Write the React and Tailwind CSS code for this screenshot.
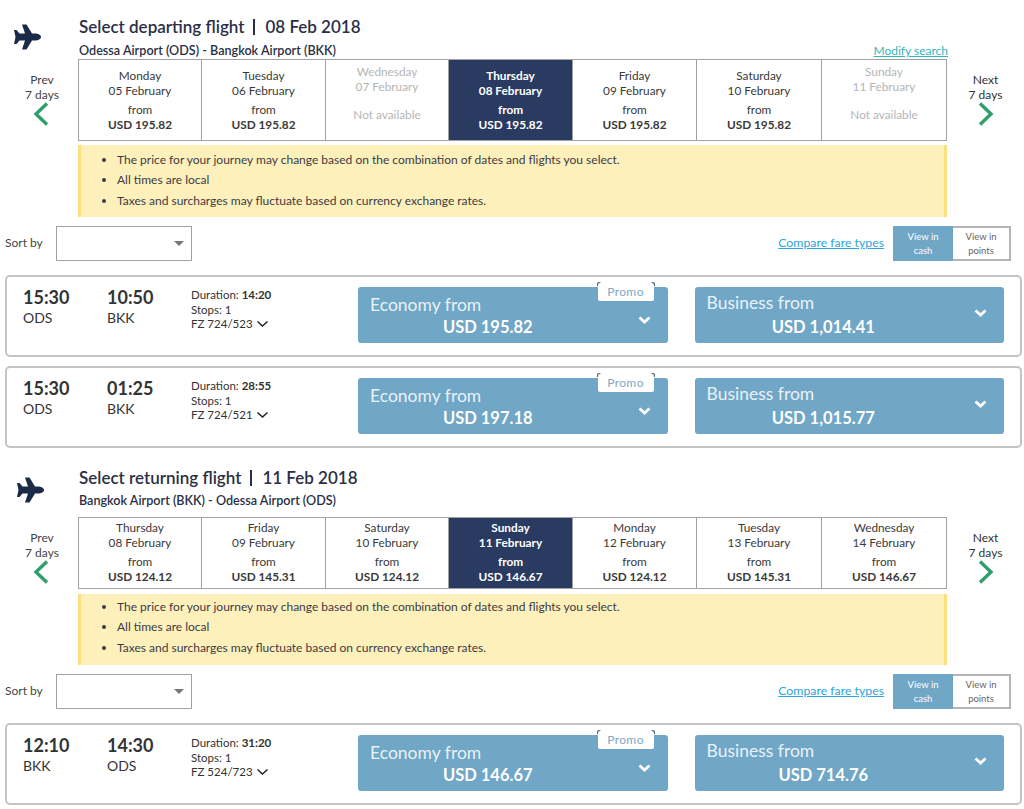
import React from 'react';

const PlaneIcon = () => (
  <svg width="30" height="28" viewBox="0 0 30 28" className="text-[#1c2a4a]">
    <path
      fill="currentColor"
      d="M29 14c0-2-3-3.500-6-3.500h-3L14.500 1.500H10l3 9H7.500L4.500 7H2l1.500 7L2 21h2.500l3-3.500H13l-3 9h4.500l5.500-9h3c3 0 6-1.500 6-3.500z"
    />
  </svg>
);

const Chevron = ({ dir }) => (
  <svg width="18" height="24" viewBox="0 0 18 24" className={dir === 'left' ? 'text-[#2e9e6b] mr-[3px]' : 'text-[#2e9e6b]'}>
    <path
      d={dir === 'left' ? 'M15 1.500 L4 12 L15 22.500' : 'M3 1.500 L14 12 L3 22.500'}
      fill="none"
      stroke="currentColor"
      strokeWidth="3.400"
    />
  </svg>
);

const SmallChevron = ({ className, thin }) => (
  <svg width="13" height="8" viewBox="0 0 13 8" className={className}>
    <path d="M1.500 1.500 L6.500 6 L11.500 1.500" fill="none" stroke="currentColor" strokeWidth={thin ? '1.500' : '2.800'} />
  </svg>
);

const DayCell = ({ day, date, price, active, disabled, last, compact }) => {
  if (disabled) {
    return (
      <div className={`flex flex-col items-center text-[11.800px] leading-[14.500px] text-[#b5b5b5] pt-[5px] ${last ? '' : 'border-r border-[#a0a0a0]'}`}>
        <div>{day}</div>
        <div>{date}</div>
        <div className="mt-[14px]">Not available</div>
      </div>
    );
  }
  return (
    <div
      className={`flex flex-col items-center text-[11.800px] leading-[14.500px] ${compact ? 'pt-[3px]' : 'pt-[9px]'} ${
        active ? 'bg-[#2a3b62] text-white font-bold' : 'text-[#3a3a3a]'
      } ${last ? '' : 'border-r border-[#a0a0a0]'}`}
    >
      <div>{day}</div>
      <div>{date}</div>
      <div className="mt-[5px]">from</div>
      <div className="font-bold">{price}</div>
    </div>
  );
};

const FareButton = ({ label, price, promo }) => (
  <div className="relative flex-1 h-[56px] rounded-[3px] bg-[#70a6c6] text-white">
    {promo && (
      <div className="absolute right-[14px] top-[-4px] w-[56px] h-[18px]">
        {/* folded corners of the ribbon */}
        <div className="absolute left-[-1px] top-[-1px] w-[4px] h-[4px] rounded-t-[2px] bg-[#55646e]"></div>
        <div className="absolute right-[-1px] top-[-1px] w-[4px] h-[4px] rounded-t-[2px] bg-[#55646e]"></div>
        <div className="absolute inset-0 flex items-center justify-center bg-white rounded-[2px] text-[12px] text-[#7fa9c4] tracking-[0.4px]">
          Promo
        </div>
      </div>
    )}
    <div className={`absolute left-[12px] text-[17.500px] leading-[20px] text-[#e9f2f7] ${promo ? 'top-[8px]' : 'top-[6px]'}`}>{label}</div>
    <div className={`absolute left-0 top-[30px] text-center text-[16.500px] leading-[20px] font-bold ${promo ? 'right-[50px]' : 'right-[52px]'}`}>{price}</div>
    <SmallChevron className={`absolute right-[17px] ${promo ? 'top-[29px]' : 'top-[22px]'}`} />
  </div>
);

const FlightCard = ({ flight }) => (
  <div className="mx-[5px] w-[1017px] h-[82px] border-2 border-[#c4c4c4] rounded-[5px] flex items-start text-[#333]">
    <div className="w-[84px] pl-[16px] pt-[10px]">
      <div className="text-[18px] leading-[20px] font-bold">{flight.depTime}</div>
      <div className="text-[14px] leading-[21px]">{flight.dep}</div>
    </div>
    <div className="w-[84px] pl-[16px] pt-[10px]">
      <div className="text-[18px] leading-[20px] font-bold">{flight.arrTime}</div>
      <div className="text-[14px] leading-[21px]">{flight.arr}</div>
    </div>
    <div className="w-[183px] pl-[16px] pt-[11px] text-[11.500px] leading-[14.500px]">
      <div>
        Duration: <span className="font-bold">{flight.duration}</span>
      </div>
      <div>Stops: 1</div>
      <div className="flex items-center gap-[3px]">
        {flight.number}
        <SmallChevron thin className="text-[#222]" />
      </div>
    </div>
    <div className="flex gap-[27px] w-[646px] mt-[10px]">
      <FareButton label="Economy from" price={flight.economy} promo={flight.promo} />
      <FareButton label="Business from" price={flight.business} />
    </div>
  </div>
);

const Section = ({ section }) => (
  <div className={section.sectionClass}>
    <div className="flex">
      <div className={`w-[78px] ${section.planeClass}`}>
        <PlaneIcon />
      </div>
      <div className="w-[870px] pl-[1px]">
        <div className="text-[17px] leading-[20px] font-semibold text-[#2a2f45] flex items-center">
          <span>{section.title}</span>
          <span className="ml-[9px] mr-[10px] w-[2px] h-[16px] bg-[#2a2f45]"></span>
          <span>{section.date}</span>
        </div>
        <div className={`flex items-end justify-between text-[12.600px] leading-[15px] font-semibold text-[#2a2f45] ${section.routeClass}`}>
          <span>{section.route}</span>
          {section.modify && <span className="text-[12px] text-[#35b5bd] font-normal underline">Modify search</span>}
        </div>
      </div>
    </div>
    <div className="flex">
      <div className="w-[78px] flex flex-col items-center text-[12px] leading-[15px] text-[#444] pt-[13px] pl-[6px]">
        <div>Prev</div>
        <div>7 days</div>
        <Chevron dir="left" />
      </div>
      <div className={`w-[869px] border border-[#a0a0a0] grid grid-cols-[123px_124px_123px_124px_124px_125px_1fr] ${section.stripClass}`}>
        {section.days.map((d) => (
          <DayCell key={d.date} compact={section.compact} {...d} />
        ))}
      </div>
      <div className="w-[77px] flex flex-col items-center text-[12px] leading-[15px] text-[#333] pt-[13px]">
        <div>Next</div>
        <div>7 days</div>
        <Chevron dir="right" />
      </div>
    </div>
    <div className={`ml-[78px] w-[869px] bg-[#fdf0bb] border-x-[3px] border-[#fde07e] ${section.noteClass}`}>
      <ul className="list-disc pl-[36px] text-[12px] leading-[20.300px] text-[#3d3a45]">
        <li>The price for your journey may change based on the combination of dates and flights you select.</li>
        <li>All times are local</li>
        <li>Taxes and surcharges may fluctuate based on currency exchange rates.</li>
      </ul>
    </div>
    <div className="flex items-center mt-[9px] h-[35px] pl-[5px] pr-[13px]">
      <div className="w-[51px] pb-[2px] text-[12px] text-[#444]">Sort by</div>
      <div className="w-[136px] h-[35px] border border-[#a0a0a0] flex items-center justify-end pr-[7px]">
        <div className="w-0 h-0 border-x-[5px] border-x-transparent border-t-[5px] border-t-[#777]"></div>
      </div>
      <div className="ml-auto text-[12.300px] text-[#2ea3dc] underline mr-[9px]">Compare fare types</div>
      <div className="flex h-[35px] text-[9.500px] leading-[13.500px] text-center">
        <div className="w-[60px] bg-[#70a6c6] text-white pt-[4px]">
          View in
          <br />
          cash
        </div>
        <div className="w-[58px] border-2 border-l-0 border-[#b5b5b5] text-[#666] pt-[2px]">
          View in
          <br />
          points
        </div>
      </div>
    </div>
    <div className="flex flex-col gap-[9px] mt-[14px]">
      {section.flights.map((f) => (
        <FlightCard key={f.arrTime} flight={f} />
      ))}
    </div>
  </div>
);

const departing = {
  sectionClass: 'pt-[17px]',
  planeClass: 'pl-[12px] pt-[6px]',
  routeClass: 'mt-[6px] mb-[1px]',
  stripClass: 'h-[82px]',
  noteClass: 'mt-[4px] h-[72px] pt-[5px]',
  title: 'Select departing flight',
  date: '08 Feb 2018',
  route: 'Odessa Airport (ODS) - Bangkok Airport (BKK)',
  modify: true,
  days: [
    { day: 'Monday', date: '05 February', price: 'USD 195.82' },
    { day: 'Tuesday', date: '06 February', price: 'USD 195.82' },
    { day: 'Wednesday', date: '07 February', disabled: true },
    { day: 'Thursday', date: '08 February', price: 'USD 195.82', active: true },
    { day: 'Friday', date: '09 February', price: 'USD 195.82' },
    { day: 'Saturday', date: '10 February', price: 'USD 195.82' },
    { day: 'Sunday', date: '11 February', disabled: true, last: true },
  ],
  flights: [
    { depTime: '15:30', dep: 'ODS', arrTime: '10:50', arr: 'BKK', duration: '14:20', number: 'FZ 724/523', economy: 'USD 195.82', business: 'USD 1,014.41', promo: true },
    { depTime: '15:30', dep: 'ODS', arrTime: '01:25', arr: 'BKK', duration: '28:55', number: 'FZ 724/521', economy: 'USD 197.18', business: 'USD 1,015.77', promo: true },
  ],
};

const returning = {
  sectionClass: 'mt-[20px]',
  planeClass: 'pl-[15px] pt-[8px]',
  routeClass: 'mt-[5px] mb-[9px]',
  stripClass: 'h-[72px]',
  noteClass: 'mt-[5px] h-[71px] pt-[3px]',
  compact: true,
  title: 'Select returning flight',
  date: '11 Feb 2018',
  route: 'Bangkok Airport (BKK) - Odessa Airport (ODS)',
  days: [
    { day: 'Thursday', date: '08 February', price: 'USD 124.12' },
    { day: 'Friday', date: '09 February', price: 'USD 145.31' },
    { day: 'Saturday', date: '10 February', price: 'USD 124.12' },
    { day: 'Sunday', date: '11 February', price: 'USD 146.67', active: true },
    { day: 'Monday', date: '12 February', price: 'USD 124.12' },
    { day: 'Tuesday', date: '13 February', price: 'USD 145.31' },
    { day: 'Wednesday', date: '14 February', price: 'USD 146.67', last: true },
  ],
  flights: [
    { depTime: '12:10', dep: 'BKK', arrTime: '14:30', arr: 'ODS', duration: '31:20', number: 'FZ 524/723', economy: 'USD 146.67', business: 'USD 714.76', promo: true },
  ],
};

const App = () => (
  <div className="w-[1024px] h-[809px] overflow-hidden bg-white font-['Lato',sans-serif]">
    <Section section={departing} />
    <Section section={returning} />
  </div>
);

export default App;
